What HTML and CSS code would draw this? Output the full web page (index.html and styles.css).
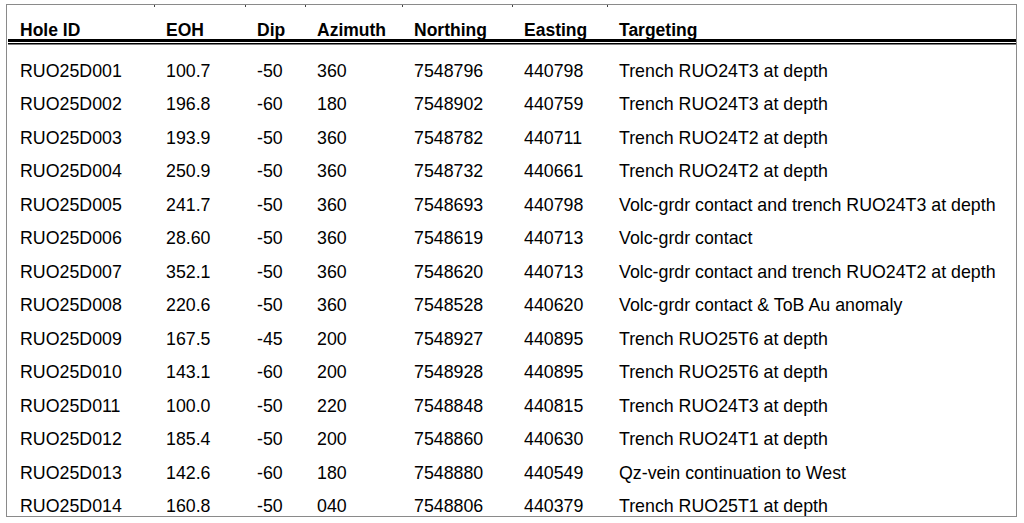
FILE: index.html
```html
<!DOCTYPE html>
<html>
<head>
<meta charset="utf-8">
<link rel="stylesheet" href="styles.css">
</head>
<body>
<div class="sheet">
  <div class="row head">
    <div class="cell">Hole ID</div><div class="cell">EOH</div><div class="cell">Dip</div><div class="cell">Azimuth</div><div class="cell">Northing</div><div class="cell">Easting</div><div class="cell">Targeting</div>
  </div>
  <div class="body">
    <div class="row"><div class="cell">RUO25D001</div><div class="cell">100.7</div><div class="cell">-50</div><div class="cell">360</div><div class="cell">7548796</div><div class="cell">440798</div><div class="cell">Trench RUO24T3 at depth</div></div>
    <div class="row"><div class="cell">RUO25D002</div><div class="cell">196.8</div><div class="cell">-60</div><div class="cell">180</div><div class="cell">7548902</div><div class="cell">440759</div><div class="cell">Trench RUO24T3 at depth</div></div>
    <div class="row"><div class="cell">RUO25D003</div><div class="cell">193.9</div><div class="cell">-50</div><div class="cell">360</div><div class="cell">7548782</div><div class="cell">440711</div><div class="cell">Trench RUO24T2 at depth</div></div>
    <div class="row"><div class="cell">RUO25D004</div><div class="cell">250.9</div><div class="cell">-50</div><div class="cell">360</div><div class="cell">7548732</div><div class="cell">440661</div><div class="cell">Trench RUO24T2 at depth</div></div>
    <div class="row"><div class="cell">RUO25D005</div><div class="cell">241.7</div><div class="cell">-50</div><div class="cell">360</div><div class="cell">7548693</div><div class="cell">440798</div><div class="cell">Volc-grdr contact and trench RUO24T3 at depth</div></div>
    <div class="row"><div class="cell">RUO25D006</div><div class="cell">28.60</div><div class="cell">-50</div><div class="cell">360</div><div class="cell">7548619</div><div class="cell">440713</div><div class="cell">Volc-grdr contact</div></div>
    <div class="row"><div class="cell">RUO25D007</div><div class="cell">352.1</div><div class="cell">-50</div><div class="cell">360</div><div class="cell">7548620</div><div class="cell">440713</div><div class="cell">Volc-grdr contact and trench RUO24T2 at depth</div></div>
    <div class="row"><div class="cell">RUO25D008</div><div class="cell">220.6</div><div class="cell">-50</div><div class="cell">360</div><div class="cell">7548528</div><div class="cell">440620</div><div class="cell">Volc-grdr contact &amp; ToB Au anomaly</div></div>
    <div class="row"><div class="cell">RUO25D009</div><div class="cell">167.5</div><div class="cell">-45</div><div class="cell">200</div><div class="cell">7548927</div><div class="cell">440895</div><div class="cell">Trench RUO25T6 at depth</div></div>
    <div class="row"><div class="cell">RUO25D010</div><div class="cell">143.1</div><div class="cell">-60</div><div class="cell">200</div><div class="cell">7548928</div><div class="cell">440895</div><div class="cell">Trench RUO25T6 at depth</div></div>
    <div class="row"><div class="cell">RUO25D011</div><div class="cell">100.0</div><div class="cell">-50</div><div class="cell">220</div><div class="cell">7548848</div><div class="cell">440815</div><div class="cell">Trench RUO24T3 at depth</div></div>
    <div class="row"><div class="cell">RUO25D012</div><div class="cell">185.4</div><div class="cell">-50</div><div class="cell">200</div><div class="cell">7548860</div><div class="cell">440630</div><div class="cell">Trench RUO24T1 at depth</div></div>
    <div class="row"><div class="cell">RUO25D013</div><div class="cell">142.6</div><div class="cell">-60</div><div class="cell">180</div><div class="cell">7548880</div><div class="cell">440549</div><div class="cell">Qz-vein continuation to West</div></div>
    <div class="row"><div class="cell">RUO25D014</div><div class="cell">160.8</div><div class="cell">-50</div><div class="cell">040</div><div class="cell">7548806</div><div class="cell">440379</div><div class="cell">Trench RUO25T1 at depth</div></div>
  </div>
</div>
</body>
</html>
```

FILE: styles.css
```css
html, body {
  margin: 0;
  padding: 0;
  background: #ffffff;
}

body {
  font-family: "Liberation Sans", Arial, sans-serif;
  font-size: 17.8px;
  color: #000;
}

.sheet {
  margin: 4px 7px 0 6px;
  height: 511px;
  border: 1px solid #8a8a8a;
  overflow: hidden;
  box-sizing: content-box;
}

.row {
  display: grid;
  grid-template-columns: 146px 91px 60px 97px 110px 95px 1fr;
  line-height: 20px;
}

.cell {
  padding-left: 12px;
  white-space: nowrap;
}

.head {
  margin-left: 1px;
  padding-top: 17px;
  line-height: 17px;
  font-weight: bold;
  font-size: 17.5px;
  border-bottom: 3px solid #000;
  box-shadow: 0 1px 0 #fff, 0 2.5px 0 #000;
}

.head .cell {
  position: relative;
}

.head .cell + .cell::before {
  content: "";
  position: absolute;
  left: 0;
  top: -17px;
  width: 1px;
  height: 2px;
  background: #444;
}

.body {
  padding-top: 11.75px;
  margin-left: 1px;
}

.body .row {
  padding: 6.75px 0;
}
```
